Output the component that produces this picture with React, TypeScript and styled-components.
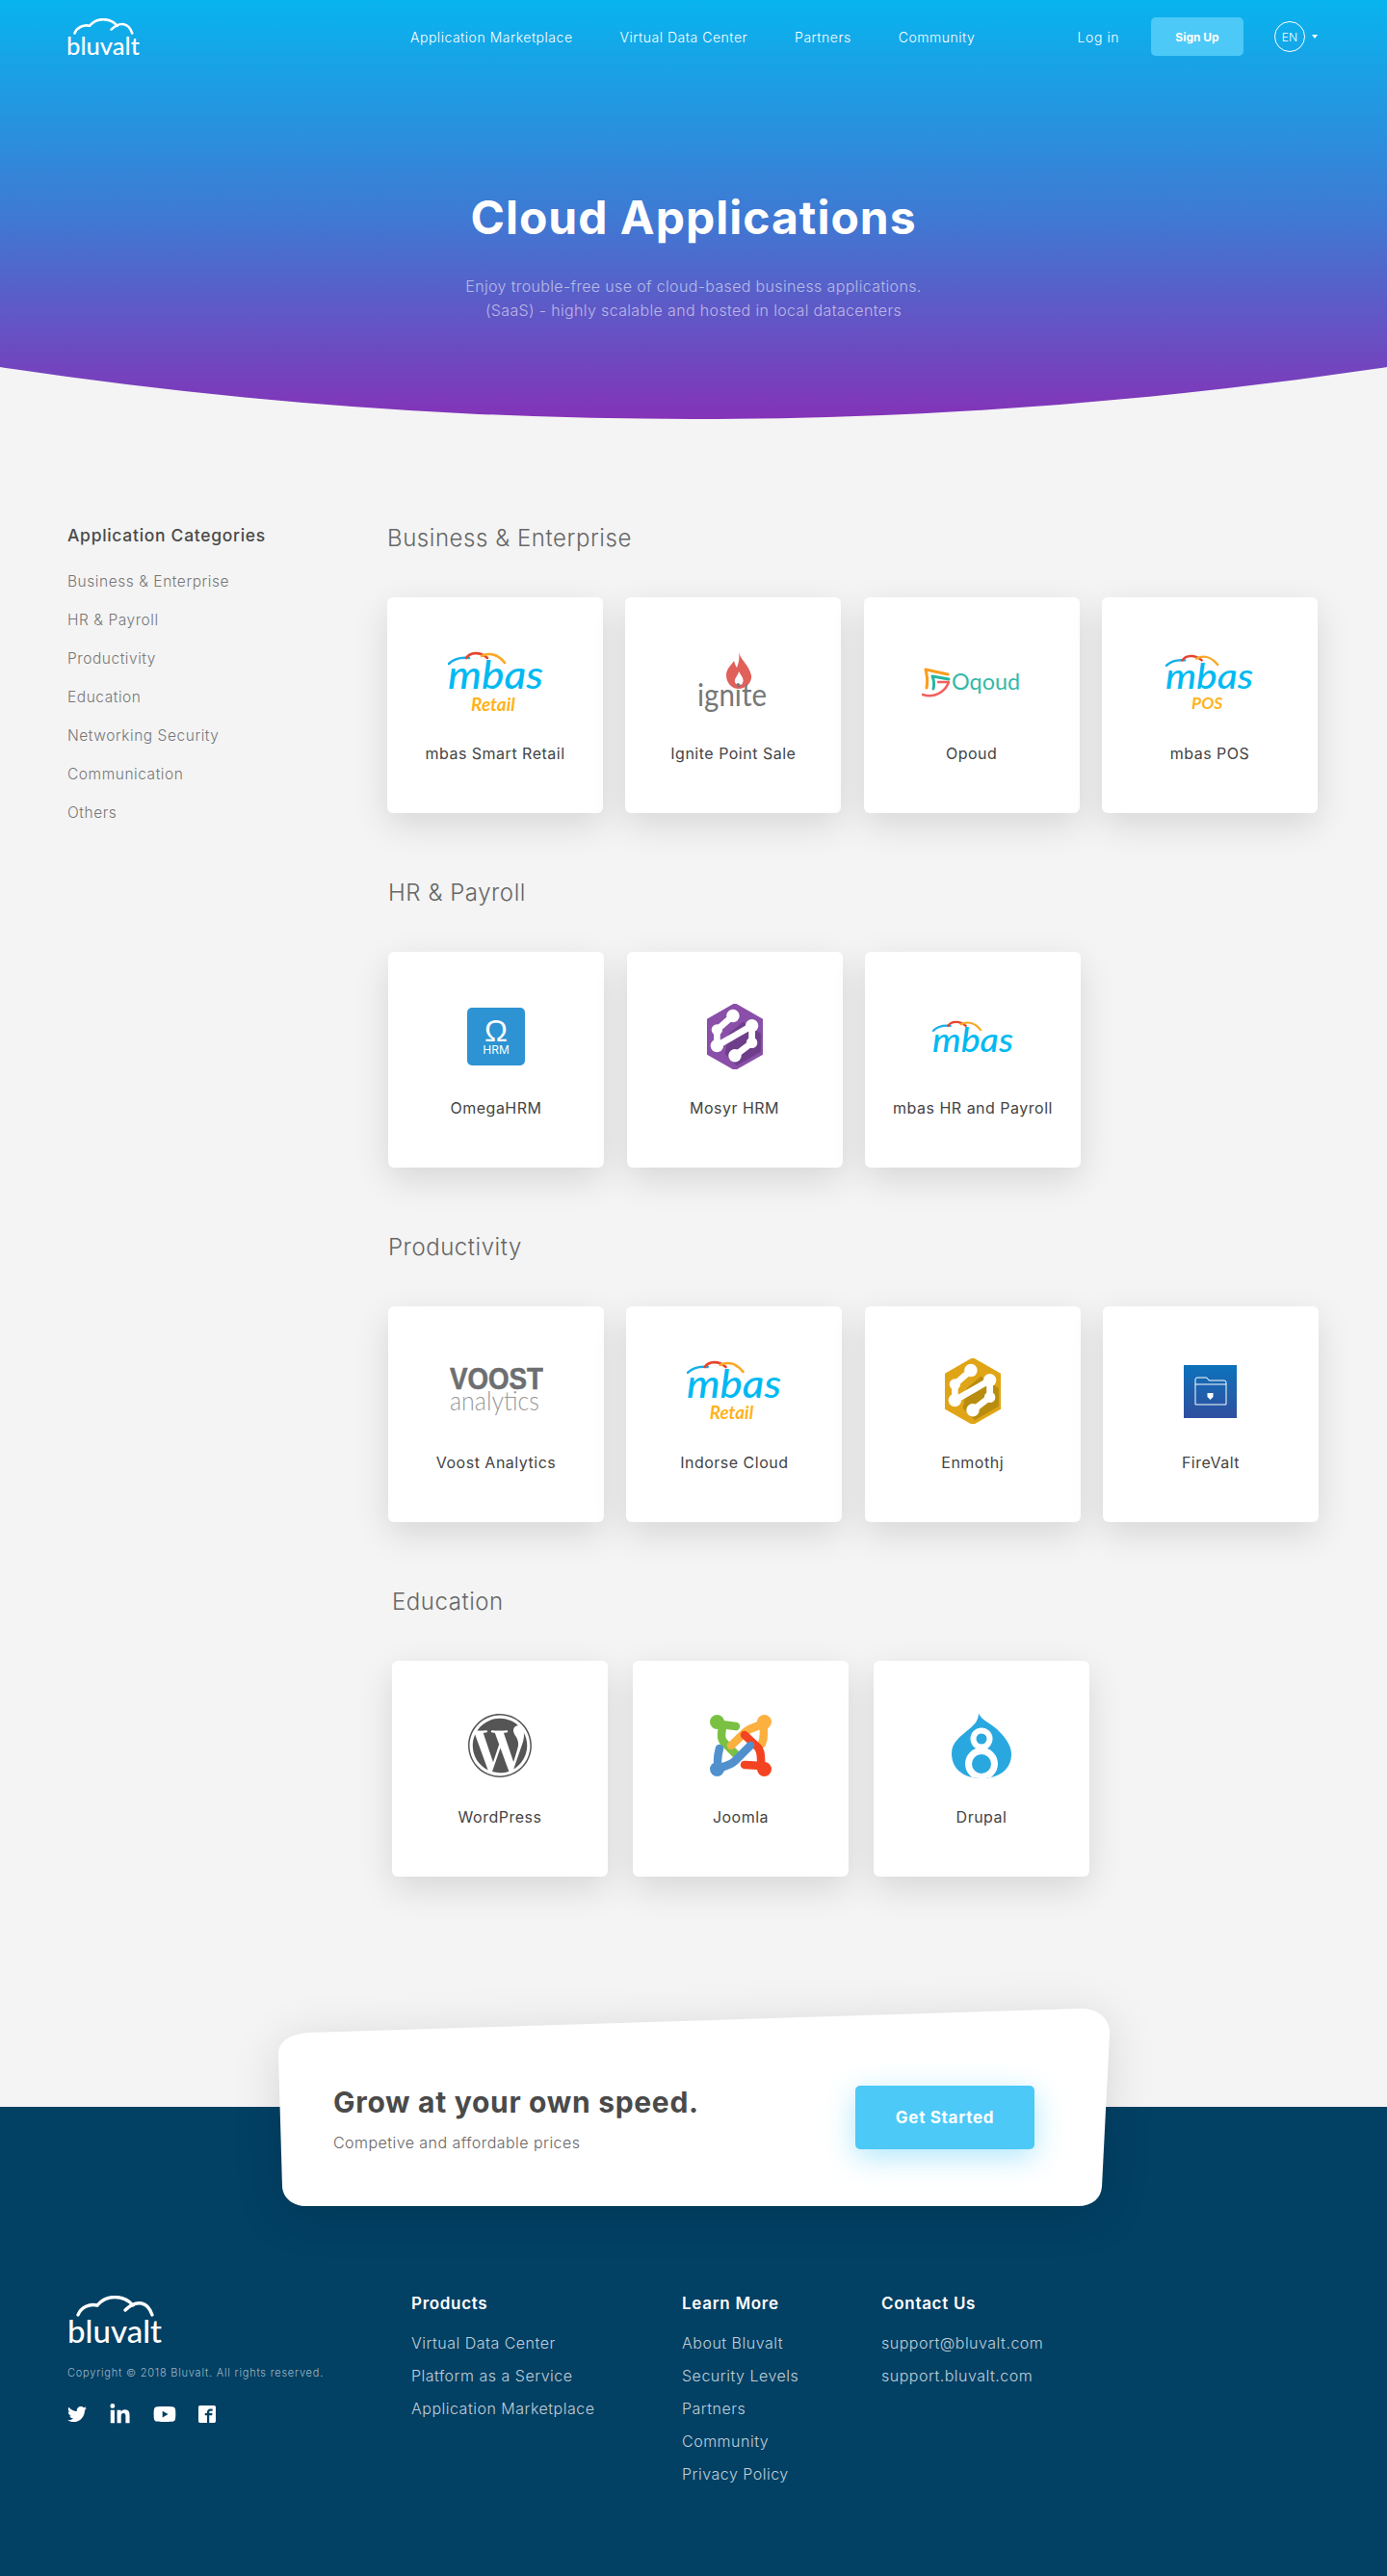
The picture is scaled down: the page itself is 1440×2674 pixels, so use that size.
import styled, { createGlobalStyle } from 'styled-components';
import { FaLinkedinIn, FaTwitter, FaWordpress, FaYoutube } from 'react-icons/fa';
import { ImFacebook2 } from 'react-icons/im';

const GlobalStyle = createGlobalStyle`
    * {
        box-sizing: border-box;
    }

    body {
        margin: 0;
        background: #f4f4f4;
        font-family: 'Inter', 'Liberation Sans', sans-serif;
    }

    a {
        color: inherit;
        text-decoration: none;
    }

    ul {
        margin: 0;
        padding: 0;
        list-style: none;
    }
`;

const Hero = styled.section`
    height: 435px;
    padding-top: 18px;
    background: linear-gradient(180deg, #08b4ee 0%, #3f79d3 52%, #8433b8 100%);
    clip-path: circle(4827px at 720px -4392px);
`;

const Header = styled.header`
    display: flex;
    align-items: center;
    height: 40px;
    padding: 0 72px 0 69px;
    color: #fff;
`;

const Nav = styled.nav`
    display: flex;
    gap: 49px;
    margin-left: 281px;
    font-size: 14px;
    font-weight: 300;
    letter-spacing: 0.52px;
`;

const HeaderRight = styled.div`
    display: flex;
    align-items: center;
    margin-left: auto;
    font-size: 14px;
    font-weight: 300;
    letter-spacing: 0.55px;
`;

const SignUp = styled.a`
    display: flex;
    align-items: center;
    justify-content: center;
    width: 96px;
    height: 40px;
    margin: 0 32px 0 33px;
    border-radius: 5px;
    background: #4cc9f7;
    font-size: 12px;
    font-weight: 700;
    letter-spacing: 0;
`;

const LangCircle = styled.span`
    display: flex;
    align-items: center;
    justify-content: center;
    width: 32px;
    height: 32px;
    border: 1px solid #fff;
    border-radius: 50%;
    font-size: 12px;
    letter-spacing: 0;
`;

const Caret = styled.span`
    width: 0;
    height: 0;
    margin-left: 7px;
    border-top: 4px solid #fff;
    border-left: 3.5px solid transparent;
    border-right: 3.5px solid transparent;
`;

const HeroText = styled.div`
    margin-top: 140px;
    text-align: center;
    color: #fff;
`;

const Title = styled.h1`
    margin: 0;
    font-size: 48px;
    line-height: 56px;
    font-weight: 700;
    letter-spacing: 1px;
`;

const Subtitle = styled.p`
    margin: 31px 0 0;
    font-size: 16px;
    line-height: 24.5px;
    font-weight: 300;
    letter-spacing: 0.35px;
    color: rgba(255, 255, 255, 0.58);
`;

const Main = styled.main`
    display: grid;
    grid-template-columns: 332px 1fr;
    padding: 108px 0 70px 70px;
`;

const SideHeading = styled.h3`
    margin: 0 0 23px;
    font-size: 17.5px;
    line-height: 26px;
    font-weight: 500;
    letter-spacing: 0.7px;
    color: #4a4a4a;
`;

const SideItem = styled.li`
    margin-bottom: 16px;
    font-size: 15.5px;
    line-height: 24px;
    font-weight: 300;
    letter-spacing: 0.55px;
    color: #777;
`;

const Section = styled.section<{ $inset: number }>`
    margin-bottom: 67px;
    padding-left: ${(p) => p.$inset}px;
`;

const SectionTitle = styled.h2`
    margin: 0 0 45px;
    font-size: 24px;
    line-height: 32px;
    font-weight: 300;
    letter-spacing: 0.55px;
    color: #666;
`;

const CardRow = styled.div<{ $gap: number }>`
    display: grid;
    grid-template-columns: repeat(4, 224px);
    column-gap: ${(p) => p.$gap}px;
`;

const Card = styled.article`
    height: 224px;
    border-radius: 6px;
    background: #fff;
    box-shadow: 0 12px 36px rgba(0, 0, 0, 0.12);
`;

const LogoSlot = styled.div`
    display: flex;
    align-items: center;
    justify-content: center;
    height: 120px;
    margin-top: 28px;
`;

const CardName = styled.h4`
    margin: 2px 0 0;
    text-align: center;
    font-size: 16px;
    line-height: 24px;
    font-weight: 400;
    letter-spacing: 0.5px;
    color: #444;
`;

const CtaWrap = styled.div`
    position: relative;
    z-index: 1;
    display: flex;
    justify-content: space-between;
    width: 863px;
    height: 205px;
    margin: 0 0 -103px 289px;
    padding: 79px 78px 0 57px;
`;

const CtaShape = styled.svg`
    position: absolute;
    top: 0;
    left: 0;
    z-index: -1;
    overflow: visible;
    filter: drop-shadow(0 8px 24px rgba(0, 0, 0, 0.12));
`;

const CtaTitle = styled.h2`
    margin: 0;
    font-size: 30px;
    line-height: 36px;
    font-weight: 700;
    letter-spacing: 0.7px;
    color: #4a4a4a;
`;

const CtaText = styled.p`
    margin: 12px 0 0;
    font-size: 16px;
    line-height: 24px;
    font-weight: 300;
    letter-spacing: 0.45px;
    color: #666;
`;

const CtaButton = styled.a`
    display: flex;
    align-items: center;
    justify-content: center;
    width: 186px;
    height: 66px;
    margin-top: 1px;
    border-radius: 5px;
    background: #4cc9f7;
    box-shadow: 0 8px 30px rgba(76, 201, 247, 0.45);
    font-size: 17px;
    font-weight: 700;
    letter-spacing: 0.7px;
    color: #fff;
`;

const Footer = styled.footer`
    display: grid;
    grid-template-columns: 357px 281px 207px 1fr;
    height: 487px;
    padding: 192px 0 0 70px;
    background: #024064;
    color: #fff;
`;

const Brand = styled.div`
    padding-top: 4px;
`;

const Copyright = styled.p`
    margin: 22px 0 23px;
    font-size: 11px;
    line-height: 16px;
    letter-spacing: 0.78px;
    font-weight: 300;
    color: rgba(255, 255, 255, 0.62);
`;

const Socials = styled.div`
    display: flex;
    align-items: center;
    gap: 23px;
`;

const ColumnTitle = styled.h5`
    margin: 0 0 17px;
    font-size: 17px;
    line-height: 24px;
    font-weight: 600;
    letter-spacing: 0.7px;
`;

const ColumnLink = styled.li`
    margin-bottom: 10px;
    font-size: 16px;
    line-height: 24px;
    font-weight: 300;
    letter-spacing: 0.5px;
    color: rgba(255, 255, 255, 0.75);
`;

const BluvaltLogo = ({ width }: { width: number }) => (
    <svg width={width} viewBox="0 0 98 50" style={{ display: 'block' }}>
        <g fill="none" stroke="#fff" strokeWidth="3.4" strokeLinecap="round">
            <path d="M11 20C14 12 23 8 31 10C36 4 43 1.500 49 1.500C57 1.500 63 4 68 10" />
            <path d="M60 15C66 9 72 7 77 8C82 9 86 14 88 20" />
        </g>
        <text x="0" y="49" fontFamily="Lato" fontSize="33" fontWeight="500" fill="#fff" textLength="98" lengthAdjust="spacingAndGlyphs">
            bluvalt
        </text>
    </svg>
);

const MbasLogo = ({ width, sub, subX = 47, noSub }: { width: number; sub?: string; subX?: number; noSub?: boolean }) => (
    <svg width={width} viewBox={noSub ? '0 0 99 41' : '0 0 99 64'}>
        <g fill="none" strokeWidth="2.6" strokeLinecap="round">
            <path d="M1 13C6 8 13 6 22 7" stroke="#18aee8" />
            <path d="M19 7C23 1 33 0 41 7" stroke="#e8432e" />
            <path d="M35 5C43 1 52 3 59 12" stroke="#f9a825" />
        </g>
        <text x="0" y="39" fontFamily="Lato" fontStyle="italic" fontWeight="500" fontSize="40" fill="#00b9f2" textLength="99" lengthAdjust="spacingAndGlyphs">
            mbas
        </text>
        {sub && (
            <text x={subX} y="62" textAnchor="middle" fontFamily="Lato" fontStyle="italic" fontWeight="700" fontSize="19" fill="#ffb31a">
                {sub}
            </text>
        )}
    </svg>
);

const IgniteLogo = () => (
    <svg width="75" viewBox="0 0 75 62">
        <path
            d="M43 0C45 8 54 14 56 24C57 32 50 38 43 38C35 38 30 31 30 24C30 17 35 14 38 9C39 12 40 15 41 16C43 11 44 6 43 0Z"
            fill="#e0605a"
        />
        <path d="M43 20C46 25 49 28 47 32C46 35 40 35 39 31C38 27 42 25 43 20Z" fill="#fff" />
        <text x="0" y="56" fontFamily="Lato" fontWeight="400" fontSize="33" fill="#777" textLength="72" lengthAdjust="spacingAndGlyphs">
            ignite
        </text>
    </svg>
);

const OqoudLogo = () => (
    <svg width="103" viewBox="0 0 103 31">
        <g fill="none" strokeLinecap="round">
            <path d="M4 2L27 7M4 2C6 10 6 16 5 21" stroke="#f99d1c" strokeWidth="3" />
            <path d="M11 9L28 12M11 9C13 14 13 18 12 22" stroke="#27b5a0" strokeWidth="3" />
            <path d="M1 28C12 32 24 26 28 15M17 15L27 15" stroke="#f0605f" strokeWidth="2.4" />
        </g>
        <text x="31" y="23" fontFamily="Lato" fontWeight="400" fontSize="24" fill="#35b9a8" textLength="71" lengthAdjust="spacingAndGlyphs">
            Oqoud
        </text>
    </svg>
);

const OmegaLogo = () => (
    <svg width="60" viewBox="0 0 60 60">
        <rect width="60" height="60" rx="5" fill="#2d93d2" />
        <text x="30" y="35" textAnchor="middle" fontFamily="Liberation Sans" fontSize="32" fill="#fff">
            Ω
        </text>
        <text x="30" y="48" textAnchor="middle" fontFamily="Inter" fontSize="12" fill="#fff">
            HRM
        </text>
    </svg>
);

const HexLogo = ({ light, dark, width }: { light: string; dark: string; width: number }) => (
    <svg width={width} viewBox="0 0 56 66">
        <path d="M28 0L56 16V50L28 66L0 50V16Z" fill={light} stroke={light} strokeWidth="1.500" strokeLinejoin="round" />
        <path d="M22 30L36 18L54 30V48L30 62L18 50Z" fill={dark} opacity="0.6" />
        <g fill="none" stroke="#fff" strokeWidth="6.500" strokeLinecap="round" strokeLinejoin="round">
            <path d="M26 12L10 26V42L45 22V39L28 52" />
        </g>
        <g fill="#fff">
            <circle cx="26" cy="12" r="6.500" />
            <circle cx="10" cy="26" r="5.500" />
            <circle cx="10" cy="42" r="6.500" />
            <circle cx="45" cy="22" r="6.500" />
            <circle cx="45" cy="39" r="5.500" />
            <circle cx="28" cy="52" r="6.500" />
        </g>
    </svg>
);

const VoostLogo = () => (
    <svg width="97" viewBox="0 0 97 53">
        <text x="0" y="24" fontFamily="Liberation Sans" fontWeight="700" fontSize="31" fill="#6d6e70" stroke="#6d6e70" strokeWidth="0.6" textLength="97" lengthAdjust="spacingAndGlyphs">
            VOOST
        </text>
        <text x="0" y="46" fontFamily="Lato" fontWeight="300" fontSize="27" fill="#999" textLength="93" lengthAdjust="spacingAndGlyphs">
            analytics
        </text>
    </svg>
);

const FireVaultLogo = () => (
    <svg width="55" viewBox="0 0 55 55">
        <defs>
            <linearGradient id="fv" x1="0" y1="0" x2="0" y2="1">
                <stop offset="0" stopColor="#0d72bb" />
                <stop offset="1" stopColor="#2f4f9f" />
            </linearGradient>
        </defs>
        <rect width="55" height="55" fill="url(#fv)" />
        <path d="M12 41V15Q12 13 14 13H24L26 16H42Q44 16 44 18V41Z M12 20H44" fill="none" stroke="#fff" strokeWidth="1" />
        <path d="M24.500 29H30.500V33L27.500 36L24.500 33Z" fill="#fff" />
    </svg>
);

const JoomlaLogo = () => (
    <svg width="64" viewBox="0 0 64 64">
        <g fill="none" strokeWidth="8.500" strokeLinecap="round">
            <path d="M8 8C18 12 8 20 14 28L28 42M12 10L27 12" stroke="#7ac143" />
            <path d="M56 7C50 14 44 12 38 17L22 32M55 10C57 20 56 25 54 30" stroke="#fbb040" />
            <path d="M56 56C50 50 56 42 50 34L36 21M54 53L36 52" stroke="#f44321" />
            <path d="M8 57C14 52 20 54 26 48L42 32M9 55C7 48 8 42 10 35" stroke="#5091cd" />
        </g>
        <circle cx="7.500" cy="7.500" r="7.500" fill="#7ac143" />
        <circle cx="56.500" cy="7.500" r="7.500" fill="#fbb040" />
        <circle cx="56.500" cy="56.500" r="7.500" fill="#f44321" />
        <circle cx="7.500" cy="56.500" r="7.500" fill="#5091cd" />
    </svg>
);

const DrupalLogo = () => (
    <svg width="62" viewBox="0 0 62 68">
        <defs>
            <clipPath id="drop">
                <path d="M28 0C30 8 44 12 50 20C58 28 62 36 62 43C62 58 50 68 31 68C12 68 0 58 0 42C0 30 10 24 18 17C24 12 28 8 28 0Z" />
            </clipPath>
        </defs>
        <g clipPath="url(#drop)">
            <rect width="62" height="68" fill="#29a8e0" />
            <circle cx="31" cy="27" r="11.500" fill="#fff" />
            <circle cx="31" cy="27" r="5.500" fill="#29a8e0" />
            <circle cx="31" cy="53" r="17" fill="#fff" />
            <circle cx="31" cy="53" r="10" fill="#29a8e0" />
        </g>
    </svg>
);

const categories = [
    'Business & Enterprise',
    'HR & Payroll',
    'Productivity',
    'Education',
    'Networking Security',
    'Communication',
    'Others',
];

const sections = [
    {
        title: 'Business & Enterprise',
        inset: 0,
        gap: 23.33,
        apps: [
            { name: 'mbas Smart Retail', logo: <MbasLogo width={99} sub="Retail" /> },
            { name: 'Ignite Point Sale', logo: <IgniteLogo /> },
            { name: 'Opoud', logo: <OqoudLogo /> },
            { name: 'mbas POS', logo: <MbasLogo width={91} sub="POS" /> },
        ],
    },
    {
        title: 'HR & Payroll',
        inset: 1,
        gap: 23.5,
        apps: [
            { name: 'OmegaHRM', logo: <OmegaLogo /> },
            { name: 'Mosyr HRM', logo: <HexLogo width={58} light="#8a4fa8" dark="#5c3478" /> },
            { name: 'mbas HR and Payroll', logo: <MbasLogo width={84} noSub /> },
        ],
    },
    {
        title: 'Productivity',
        inset: 1,
        gap: 23.33,
        apps: [
            { name: 'Voost Analytics', logo: <VoostLogo /> },
            { name: 'Indorse Cloud', logo: <MbasLogo width={98} sub="Retail" /> },
            { name: 'Enmothj', logo: <HexLogo width={58} light="#e0a516" dark="#9c7b0a" /> },
            { name: 'FireValt', logo: <FireVaultLogo /> },
        ],
    },
    {
        title: 'Education',
        inset: 5,
        gap: 26,
        apps: [
            { name: 'WordPress', logo: <FaWordpress size={68} color="#555" /> },
            { name: 'Joomla', logo: <JoomlaLogo /> },
            { name: 'Drupal', logo: <DrupalLogo /> },
        ],
    },
];

const footerColumns = [
    { title: 'Products', links: ['Virtual Data Center', 'Platform as a Service', 'Application Marketplace'] },
    { title: 'Learn More', links: ['About Bluvalt', 'Security Levels', 'Partners', 'Community', 'Privacy Policy'] },
    { title: 'Contact Us', links: ['support@bluvalt.com', 'support.bluvalt.com'] },
];

export default function App() {
    return (
        <>
            <GlobalStyle />
            <Hero>
                <Header>
                    <BluvaltLogo width={76} />
                    <Nav>
                        <a>Application Marketplace</a>
                        <a>Virtual Data Center</a>
                        <a>Partners</a>
                        <a>Community</a>
                    </Nav>
                    <HeaderRight>
                        <a>Log in</a>
                        <SignUp>Sign Up</SignUp>
                        <LangCircle>EN</LangCircle>
                        <Caret />
                    </HeaderRight>
                </Header>
                <HeroText>
                    <Title>Cloud Applications</Title>
                    <Subtitle>
                        Enjoy trouble-free use of cloud-based business applications.
                        <br />
                        (SaaS) - highly scalable and hosted in local datacenters
                    </Subtitle>
                </HeroText>
            </Hero>
            <Main>
                <aside>
                    <SideHeading>Application Categories</SideHeading>
                    <ul>
                        {categories.map((category) => (
                            <SideItem key={category}>{category}</SideItem>
                        ))}
                    </ul>
                </aside>
                <div>
                    {sections.map((section) => (
                        <Section key={section.title} $inset={section.inset}>
                            <SectionTitle>{section.title}</SectionTitle>
                            <CardRow $gap={section.gap}>
                                {section.apps.map((app) => (
                                    <Card key={app.name}>
                                        <LogoSlot>{app.logo}</LogoSlot>
                                        <CardName>{app.name}</CardName>
                                    </Card>
                                ))}
                            </CardRow>
                        </Section>
                    ))}
                </div>
            </Main>
            <CtaWrap>
                <CtaShape width="863" height="205" viewBox="0 0 863 205">
                    <path
                        d="M0 47C0 33 14 26 32 25L833 0C850 -0.500 863 10 863 25L855 185C854 197 845 205 830 205L29 205C15 205 5 197 4 185Z"
                        fill="#fff"
                    />
                </CtaShape>
                <div>
                    <CtaTitle>Grow at your own speed.</CtaTitle>
                    <CtaText>Competive and affordable prices</CtaText>
                </div>
                <CtaButton>Get Started</CtaButton>
            </CtaWrap>
            <Footer>
                <Brand>
                    <BluvaltLogo width={98} />
                    <Copyright>Copyright © 2018 Bluvalt. All rights reserved.</Copyright>
                    <Socials>
                        <FaTwitter size={20} />
                        <FaLinkedinIn size={23} />
                        <FaYoutube size={24} />
                        <ImFacebook2 size={18} />
                    </Socials>
                </Brand>
                {footerColumns.map((column) => (
                    <div key={column.title}>
                        <ColumnTitle>{column.title}</ColumnTitle>
                        <ul>
                            {column.links.map((link) => (
                                <ColumnLink key={link}>{link}</ColumnLink>
                            ))}
                        </ul>
                    </div>
                ))}
            </Footer>
        </>
    );
}
